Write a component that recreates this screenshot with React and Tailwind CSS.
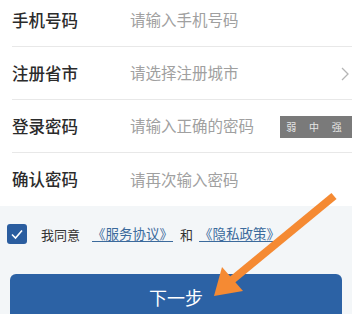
import React from 'react';

const rows = [
  { label: '手机号码', placeholder: '请输入手机号码' },
  { label: '注册省市', placeholder: '请选择注册城市', arrow: true },
  { label: '登录密码', placeholder: '请输入正确的密码', strength: true },
  { label: '确认密码', placeholder: '请再次输入密码', last: true },
];

const font = { fontFamily: '"Noto Sans CJK SC", "Noto Sans", sans-serif' };

export default function App() {
  return (
    <div className="relative w-[352px] h-[314px] overflow-hidden bg-[#f3f6f8]" style={font}>
      <div className="bg-white -mt-[6px]">
        {rows.map((row) => (
          <div key={row.label} className="pl-3">
            <div
              className={
                'h-[53px] flex items-center ' +
                (row.last ? '' : 'border-b border-[#e8e8e8]')
              }
            >
              <span className="w-[118px] text-[16.5px] font-medium text-[#2b2b2b] leading-none">{row.label}</span>
              <span className="flex-1 text-[15.5px] text-[#a0a0a0] leading-none">{row.placeholder}</span>
              {row.arrow && (
                <svg width="10" height="16" viewBox="0 0 10 16" className="mr-[2px] mt-[1px]">
                  <path d="M2 2 L8 8 L2 14" fill="none" stroke="#b5b5b5" strokeWidth="1.3" />
                </svg>
              )}
              {row.strength && (
                <div className="w-[72px] h-[22px] bg-[#7a7a7a] flex items-center justify-around pr-1 text-[10px] text-[#e6e6e6] leading-none mt-[1px]">
                  <span>弱</span>
                  <span>中</span>
                  <span>强</span>
                </div>
              )}
            </div>
          </div>
        ))}
      </div>

      <div className="flex items-center mt-[18px] pl-[7px] text-[13px] leading-none">
        <div className="w-[20px] h-[20px] rounded-[3px] bg-[#2a5d9f] flex items-center justify-center">
          <svg width="14" height="14" viewBox="0 0 14 14">
            <path d="M2 7.5 L5.5 11 L12 3.5" fill="none" stroke="#fff" strokeWidth="1.6" />
          </svg>
        </div>
        <span className="ml-[14px] text-[#333]">我同意</span>
        <span className="ml-[9px] px-[3px] text-[13.5px] text-[#3b6a9c] underline underline-offset-2">《服务协议》</span>
        <span className="ml-[4px] text-[#333]">和</span>
        <span className="ml-[3px] px-[3px] text-[13.5px] text-[#3b6a9c] underline underline-offset-2">《隐私政策》</span>
      </div>

      <div className="mx-[10px] mt-[30px] h-[60px] rounded-t-[6px] bg-[#2c62a5] flex justify-center pt-[12px]">
        <span className="text-[18px] text-white leading-none mt-[2px]">下一步</span>
      </div>

      <svg className="absolute left-0 top-0" width="352" height="314" viewBox="0 0 352 314">
        <line x1="334" y1="196" x2="232" y2="280" stroke="#f58a33" strokeWidth="8" strokeLinecap="butt" />
        <polygon points="214,296 222,267 243,291" fill="#f58a33" />
      </svg>
    </div>
  );
}
